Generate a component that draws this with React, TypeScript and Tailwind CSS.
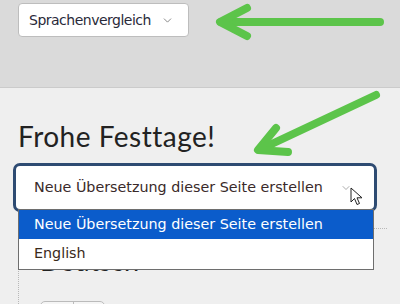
import { ChevronDown } from 'lucide-react';

const ui = { fontFamily: '"DejaVu Sans", Verdana, sans-serif' };

const GreenArrows = () => (
  <svg className="pointer-events-none absolute left-0 top-0" width="400" height="304" viewBox="0 0 400 304">
    <g stroke="#5cc44a" strokeWidth="8" strokeLinecap="round" strokeLinejoin="round" fill="none">
      <path d="M380 22 H221" />
      <path d="M247 8 L220 22 L247 36" />
      <path d="M376 95 L261 149" />
      <path d="M276 128 L258 150 L288 152" />
    </g>
  </svg>
);

const Cursor = () => (
  <svg className="absolute left-[350px] top-[187px]" width="14" height="20" viewBox="0 0 14 20">
    <path d="M1 1 L1 15 L4.5 11.5 L7 17.5 L9.5 16.5 L7 10.8 L12 10.8 Z" fill="#fff" stroke="#222" strokeWidth="1" strokeLinejoin="round" />
  </svg>
);

export default function App() {
  return (
    <div className="relative h-[304px] w-[400px] overflow-hidden bg-[#efefef]">
      <div className="h-[88px] border-b border-[#cbcbcb] bg-[#dadada] pl-[18px] pt-[3px]">
        <div
          className="flex h-[34px] w-[171px] items-center justify-between rounded-[4px] border border-[#bdbdbd] bg-white pl-[10px] pr-[14px] text-[14px] text-[#2a2a3a]"
          style={ui}
        >
          <span className="tracking-[-0.5px]">Sprachenvergleich</span>
          <ChevronDown size={13} strokeWidth={1.6} className="text-[#777]" />
        </div>
      </div>

      <div className="relative px-[13px] pt-[30px]">
        <h1
          className="ml-[5px] text-[28px] leading-[36px] tracking-[0.5px] text-[#222]"
          style={{ fontFamily: 'Lato, "Open Sans", sans-serif' }}
        >
          Frohe Festtage!
        </h1>
        <div
          className="mt-[9px] flex h-[49px] w-[364px] items-center justify-between rounded-[7px] border-[3px] border-[#2e4b72] bg-white pl-[18px] pr-[22px] text-[14.3px] text-[#3a2a2a]"
          style={ui}
        >
          <span>Neue Übersetzung dieser Seite erstellen</span>
          <ChevronDown size={12} strokeWidth={1.4} className="text-[#888]" />
        </div>

        <div className="ml-[5px] mt-[16px] flex">
          <div className="h-[80px] flex-1 border-l border-t border-dotted border-[#b8b8b8] pl-[21px] pt-[15px]">
            <div className="text-[27px] leading-[34px] text-[#222]" style={{ fontFamily: 'Lato, sans-serif' }}>
              Deutsch
            </div>
            <div className="mt-[23px] flex h-[20px] w-[65px] rounded-[5px] border border-[#bbb] bg-[#f5f5f5]">
              <div className="w-[33px] border-r border-[#bbb]" />
            </div>
          </div>
        </div>

        <div
          className="absolute left-[18px] top-[121px] w-[356px] border border-[#6e6e6e] bg-white text-[14.3px]"
          style={ui}
        >
          <div className="flex h-[29px] items-center bg-[#0b5ccb] pl-[15px] text-white">
            Neue Übersetzung dieser Seite erstellen
          </div>
          <div className="flex h-[30px] items-center pl-[15px] text-[#3a2a1a]">English</div>
        </div>
      </div>

      <Cursor />
      <GreenArrows />
    </div>
  );
}
